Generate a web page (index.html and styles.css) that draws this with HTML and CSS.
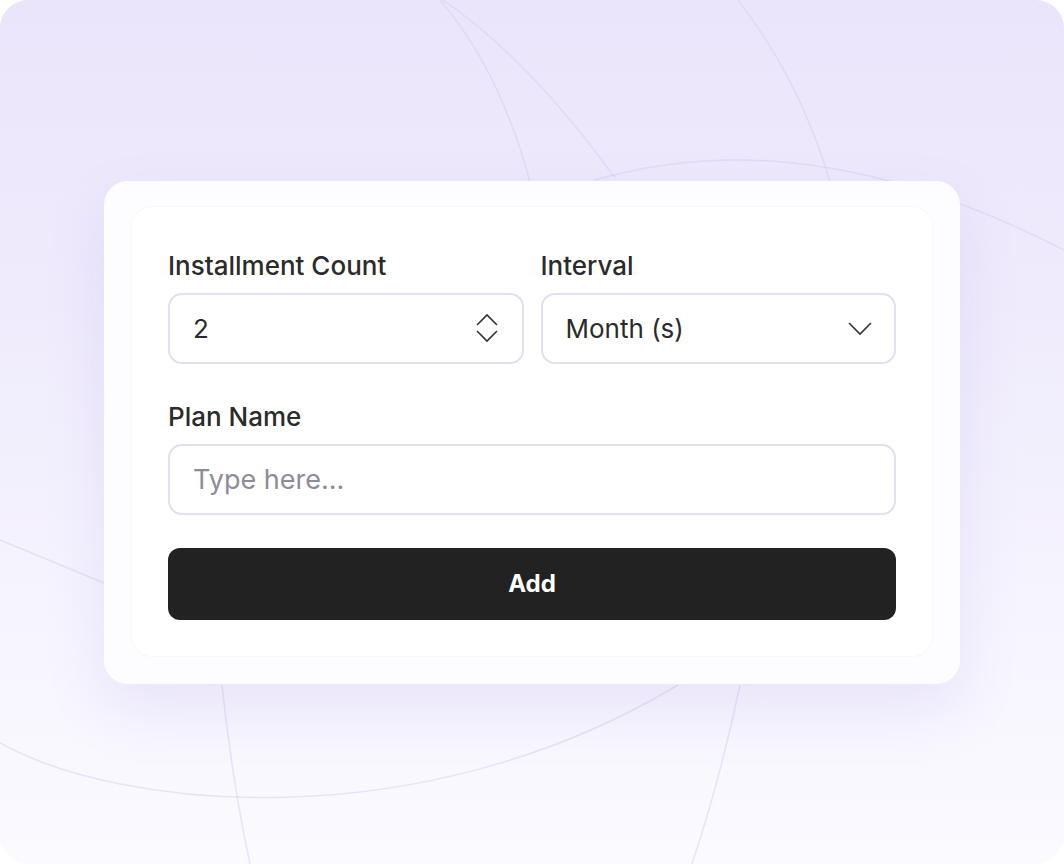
FILE: index.html
```html
<!DOCTYPE html>
<html lang="en">

<head>
    <meta charset="UTF-8">
    <meta name="viewport" content="width=device-width, initial-scale=1.0">
    <title>Add Plan</title>
    <link rel="stylesheet" href="styles.css">
</head>

<body>
    <div class="frame">
        <svg class="lines" width="1064" height="864" viewBox="0 0 1064 864" fill="none">
            <path d="M440 0 Q500 70 530 182" />
            <path d="M443 0 Q530 60 615 178" />
            <path d="M738 0 Q800 80 830 182" />
            <path d="M595 180 C700 150 850 140 1064 250" />
            <path d="M0 540 Q60 565 104 583" />
            <path d="M0 743 C120 810 420 840 678 685" />
            <path d="M222 685 Q232 780 250 864" />
            <path d="M740 685 Q720 780 692 864" />
        </svg>

        <div class="card">
            <div class="panel">
                <div class="row">
                    <div class="field">
                        <label for="count">Installment Count</label>
                        <div class="control">
                            <input type="text" id="count" value="2" readonly>
                            <svg class="stepper" width="24" height="30" viewBox="0 0 24 30" fill="none">
                                <path d="M2 12 L12 2 L22 12" />
                                <path d="M2 18 L12 28 L22 18" />
                            </svg>
                        </div>
                    </div>
                    <div class="field">
                        <label for="interval">Interval</label>
                        <div class="control">
                            <input type="text" id="interval" value="Month (s)" readonly>
                            <svg class="caret" width="26" height="16" viewBox="0 0 26 16" fill="none">
                                <path d="M2 3 L13 14 L24 3" />
                            </svg>
                        </div>
                    </div>
                </div>

                <div class="field field-plan">
                    <label for="plan">Plan Name</label>
                    <div class="control">
                        <input type="text" id="plan" class="input-plan" placeholder="Type here...">
                    </div>
                </div>

                <button class="btn-add" type="button">Add</button>
            </div>
        </div>
    </div>
</body>

</html>
```

FILE: styles.css
```css
* {
    margin: 0;
    padding: 0;
    box-sizing: border-box;
}

body {
    background-color: #fff;
    font-family: Inter, "Noto Sans", sans-serif;
    color: #2b2b2b;
}

.frame {
    position: relative;
    width: 1064px;
    height: 864px;
    border-radius: 28px;
    overflow: hidden;
    background: linear-gradient(180deg, #ebe5fb 0%, #efebfc 35%, #f6f4fe 70%, #fbfaff 100%);
    display: flex;
    align-items: center;
    justify-content: center;
}

/* 背景装饰线 */
.lines {
    position: absolute;
    top: 0;
    left: 0;
}

.lines path {
    stroke: rgba(214, 206, 244, .5);
    stroke-width: 1.5;
}

.card {
    position: relative;
    width: 856px;
    padding: 26px 28px 28px;
    background-color: rgba(253, 253, 255, .97);
    border-radius: 24px;
    box-shadow: 0 26px 60px rgba(140, 120, 220, .14);
}

.panel {
    background-color: #fff;
    border-radius: 20px;
    padding: 44px 36px 36px;
    box-shadow: 0 0 0 1px rgba(246, 245, 252, .8);
}

.row {
    display: grid;
    grid-template-columns: minmax(0, 1fr) minmax(0, 1fr);
    gap: 17px;
}

.field label {
    display: block;
    font-size: 26px;
    line-height: 30px;
    font-weight: 500;
    color: #2b2b2b;
    margin-bottom: 12px;
}

.field-plan {
    margin-top: 38px;
}

.control {
    display: flex;
    align-items: center;
    height: 71px;
    border: 2px solid #e2dff0;
    border-radius: 14px;
    padding: 0 23px;
    background-color: #fff;
}

.control input {
    flex: 1;
    width: 0;
    min-width: 0;
    border: none;
    outline: none;
    background: none;
    font-family: inherit;
    font-size: 26px;
    color: #2b2b2b;
}

.control .input-plan {
    font-size: 27px;
}

.control input::placeholder {
    color: #8d8c98;
}

.stepper,
.caret {
    flex-shrink: 0;
}

.stepper path,
.caret path {
    stroke: #333;
    stroke-width: 1.6;
}

.control .caret {
    margin-right: -2px;
}

.btn-add {
    display: block;
    width: 100%;
    height: 72px;
    margin-top: 33px;
    border: none;
    border-radius: 12px;
    background-color: #222;
    color: #fff;
    font-family: inherit;
    font-size: 24px;
    font-weight: 700;
    cursor: pointer;
}
```
